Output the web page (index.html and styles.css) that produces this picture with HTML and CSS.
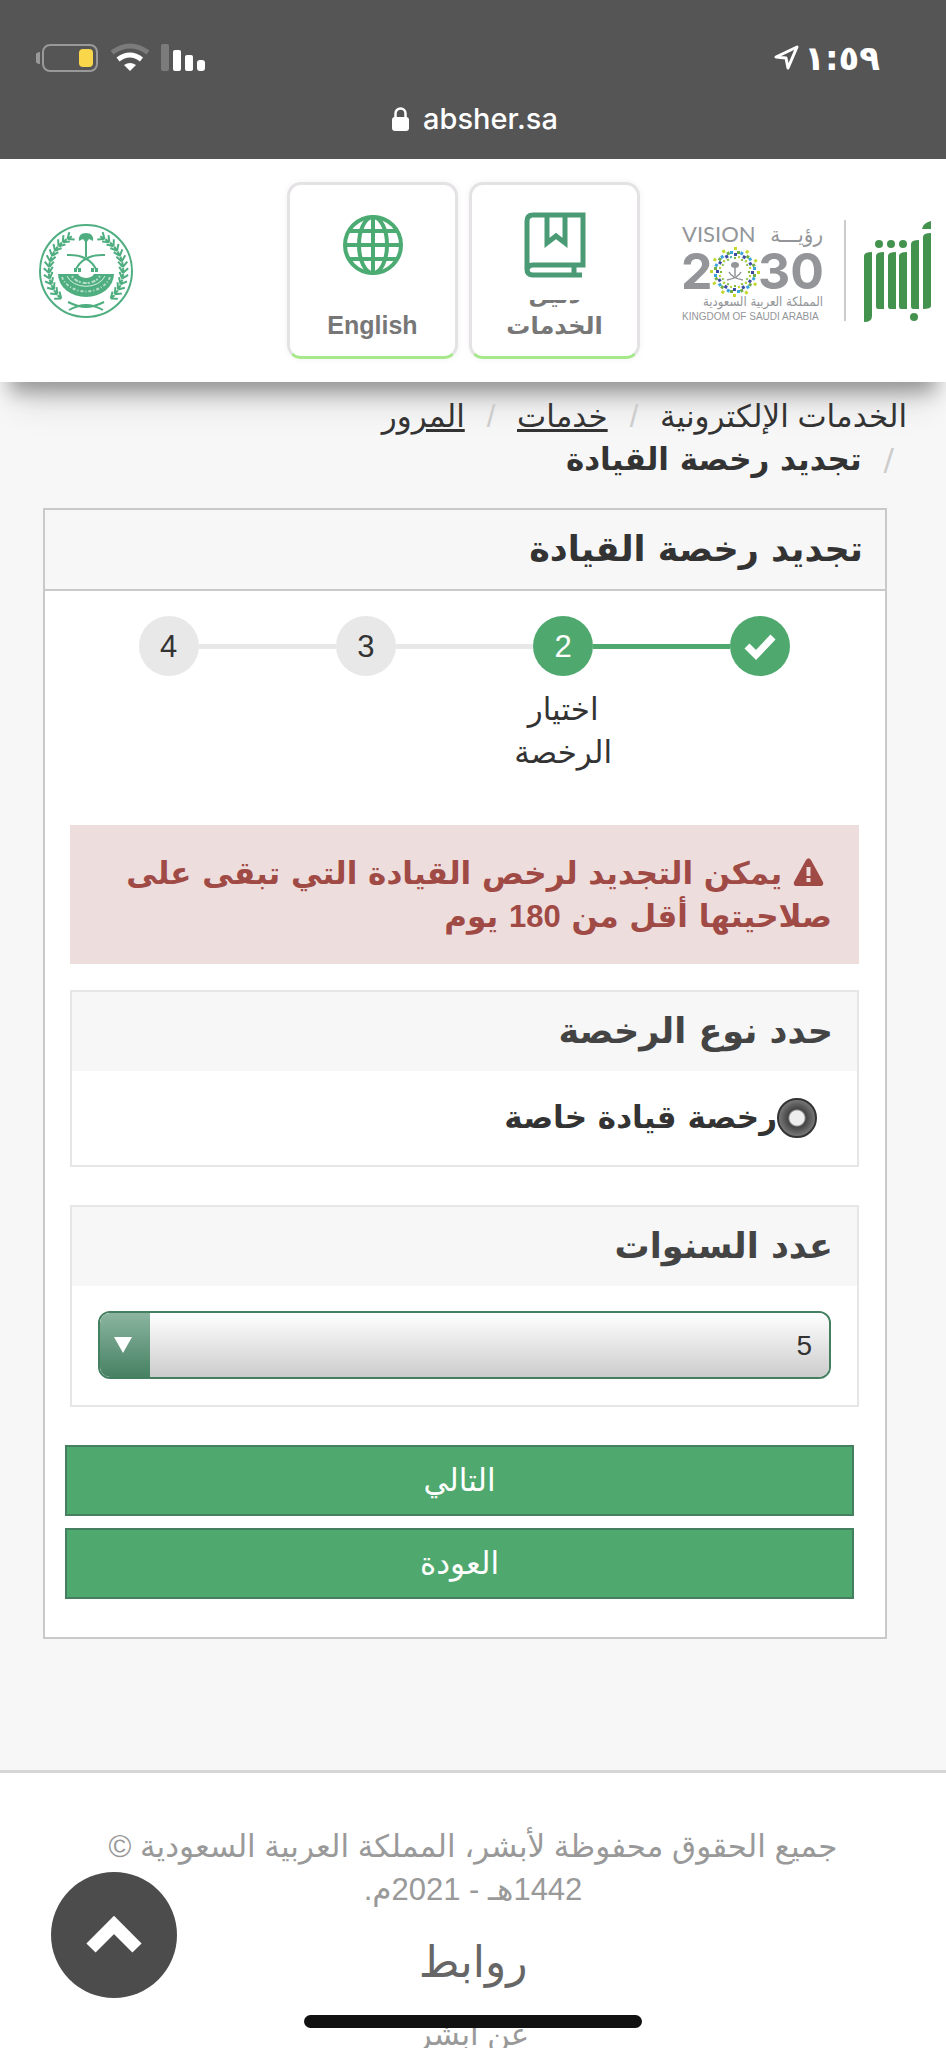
FILE: index.html
```html
<!DOCTYPE html>
<html lang="ar" dir="rtl">
<head>
  <meta charset="utf-8">
  <title>تجديد رخصة القيادة</title>
  <link rel="stylesheet" href="styles.css">
</head>
<body>

  <div class="status-bar" dir="ltr">
    <div class="status-row">
      <svg class="status-icons" width="170" height="30" viewBox="0 0 170 30">
        <path d="M4 9v12a6 6 0 0 1 0-12z" fill="#999"/>
        <rect x="7" y="2" width="54" height="26" rx="7" fill="none" stroke="#999" stroke-width="2"/>
        <rect x="43" y="6" width="14" height="18" rx="4" fill="#f9d64a"/>
        <path d="M76 9.500q18.500-13 36 0" fill="none" stroke="#7b7b7b" stroke-width="5"/>
        <path d="M82 16.500q12-9 23.500 0" fill="none" stroke="#fff" stroke-width="5"/>
        <path d="M88 22q6-4 12 0l-6 6z" fill="#fff"/>
        <rect x="125" y="1" width="8" height="27" rx="2" fill="#7b7b7b"/>
        <rect x="137" y="7" width="8" height="21" rx="2" fill="#fff"/>
        <rect x="149" y="12" width="8" height="16" rx="2" fill="#fff"/>
        <rect x="161" y="17" width="8" height="11" rx="3" fill="#fff"/>
      </svg>
      <div class="clock">
        <svg width="26" height="26" viewBox="0 0 26 26"><path d="M2 12 23 2 14 23 12 13z" fill="none" stroke="#fff" stroke-width="3" stroke-linejoin="round"/></svg>
        <span>١:٥٩</span>
      </div>
    </div>
    <div class="address">
      <svg width="17" height="24" viewBox="0 0 17 24"><rect y="10" width="17" height="14" rx="3" fill="#fff"/><path d="M3.500 11V6.500a5 5 0 0 1 10 0V11" fill="none" stroke="#fff" stroke-width="2.500"/></svg>
      <span>absher.sa</span>
    </div>
  </div>

  <header class="header">
    <div class="logos">
      <svg width="72" height="104" viewBox="0 0 72 104" fill="#43934f">
        <path d="M4 37q0-4 8-4v64q0 6-8 6z"/>
        <path d="M16 37q0-4 8-4v57h-6q-2 0-2-3z"/>
        <path d="M28 37q0-4 8-4v57h-6q-2 0-2-3z"/>
        <path d="M39 37q0-4 8-4v57h-6q-2 0-2-3z"/>
        <path d="M51 25q0-4 8-4v69h-6q-2 0-2-3z"/>
        <path d="M63 18q0-4 8-4v73q0 3-8 3z"/>
        <path d="M62 10q1-6 9-8v8z"/>
        <circle cx="19" cy="25" r="4"/><circle cx="31" cy="25" r="4"/><circle cx="43" cy="25" r="4"/>
        <circle cx="54" cy="98" r="4"/>
      </svg>
      <span class="logo-divider"></span>
      <svg class="vision" width="148" height="104" viewBox="0 0 148 104" direction="ltr">
        <defs>
          <g id="spike">
            <rect x="-1" y="-25" width="3" height="3" fill="#c3d82d"/>
            <rect x="-5" y="-21" width="3" height="3" fill="#3ba4dc"/>
            <rect x="2" y="-21" width="3" height="3" fill="#6fae45"/>
            <rect x="-1" y="-19" width="3" height="3" fill="#3a4ba0"/>
            <rect x="-5" y="-16" width="2" height="2" fill="#c3d82d"/>
            <rect x="3" y="-16" width="2" height="2" fill="#46b2c8"/>
            <rect x="-1" y="-15" width="2" height="2" fill="#7dba3c"/>
          </g>
        </defs>
        <text class="vision-word" x="0" y="23" font-size="22">VISION</text>
        <text x="141" y="23" font-size="22" text-anchor="end">رؤيـــة</text>
        <text class="vision-number" x="-1" y="70" font-size="50">2</text>
        <text class="vision-number" x="76" y="70" font-size="50">30</text>
        <g transform="translate(53 53)">
          <use href="#spike"/><use href="#spike" transform="rotate(30)"/><use href="#spike" transform="rotate(60)"/>
          <use href="#spike" transform="rotate(90)"/><use href="#spike" transform="rotate(120)"/><use href="#spike" transform="rotate(150)"/>
          <use href="#spike" transform="rotate(180)"/><use href="#spike" transform="rotate(210)"/><use href="#spike" transform="rotate(240)"/>
          <use href="#spike" transform="rotate(270)"/><use href="#spike" transform="rotate(300)"/><use href="#spike" transform="rotate(330)"/>
          <path d="M0-6V4M-8 8Q3 6 6 0M8 8Q-3 6-6 0" fill="none" stroke="#939598" stroke-width="1.500"/>
          <ellipse cy="-7" rx="4" ry="3"/>
        </g>
        <text x="141" y="87" font-size="13" text-anchor="end">المملكة العربية السعودية</text>
        <text class="vision-country" x="0" y="101" font-size="10">KINGDOM OF SAUDI ARABIA</text>
      </svg>
    </div>

    <nav class="tiles">
      <a class="tile" href="#">
        <svg width="62" height="66" viewBox="0 0 62 66" fill="none" stroke="#4a9a75" stroke-width="5">
          <path d="M50 63H9q-6 0-6-6V9q0-6 6-6h50v50H9q-6 0-6 6M50 53v10M48 63h10"/>
          <path d="M23 3v28l9-7 9 7V3"/>
        </svg>
        <span class="tile-label tile-label-long"><span>دليل</span><span>الخدمات</span></span>
      </a>
      <a class="tile" href="#" lang="en">
        <svg width="62" height="66" viewBox="0 0 62 66" fill="none" stroke="#4cab73" stroke-width="4">
          <circle cx="31" cy="33" r="28"/>
          <ellipse cx="31" cy="33" rx="14" ry="28"/>
          <path d="M31 5v56M3 33h56M8 19h46M8 47h46"/>
        </svg>
        <span class="tile-label">English</span>
      </a>
    </nav>

    <svg class="emblem" width="96" height="96" viewBox="0 0 96 96" fill="none" stroke="#4fae80">
      <defs>
        <g id="leaf"><path d="M-37 0l-5-5M-37 0l4-6M-37 0v-5" stroke-width="2"/></g>
        <g id="branch">
          <use href="#leaf" transform="rotate(-48)"/><use href="#leaf" transform="rotate(-39)"/><use href="#leaf" transform="rotate(-30)"/>
          <use href="#leaf" transform="rotate(-21)"/><use href="#leaf" transform="rotate(-12)"/><use href="#leaf" transform="rotate(-3)"/>
          <use href="#leaf" transform="rotate(6)"/><use href="#leaf" transform="rotate(15)"/><use href="#leaf" transform="rotate(24)"/>
          <use href="#leaf" transform="rotate(33)"/><use href="#leaf" transform="rotate(42)"/><use href="#leaf" transform="rotate(51)"/>
          <use href="#leaf" transform="rotate(60)"/>
        </g>
        <g id="branch-flip" transform="scale(-1 1)"><use href="#branch"/></g>
      </defs>
      <circle cx="48" cy="48" r="46" stroke-width="2"/>
      <g transform="translate(48 48)">
        <use href="#branch"/>
        <use href="#branch-flip"/>
        <path d="M-17 39Q-8 34 0 34T17 39M-18 31Q-8 36 0 36T18 31" stroke-width="2"/>
        <path d="M0-34V-14" stroke-width="2"/>
        <path d="M-7-30q-1-8 7-8t7 8l-4-2-3 4-3-4z" fill="#4fae80" stroke="none"/>
        <path d="M-19-16Q2-17 10-2M19-16Q-2-17-10-2" stroke-width="2"/>
        <path d="M-12-1h7M5-1h7" stroke-width="4" stroke-dasharray="3 1"/>
        <path d="M-28 3h56a28 23 0 0 1-56 0z" fill="#4fae80" stroke="none"/>
        <path d="M-19 5a20 15 0 0 0 38 0" stroke="#d7eee2" stroke-width="1"/>
        <path d="M-24 6a25 20 0 0 0 48 0" stroke="#b5ddca" stroke-width="2" stroke-dasharray="3 2 1 2"/>
        <path d="M-14 5a15 11 0 0 0 28 0" stroke="#b5ddca" stroke-width="2" stroke-dasharray="2 2 4 1"/>
        <path d="M-8 2a8 5 0 0 0 16 0z" fill="#fff" stroke="none"/>
      </g>
    </svg>
  </header>

  <main>
    <ol class="breadcrumb">
      <li>الخدمات الإلكترونية</li>
      <li><a href="#">خدمات</a></li>
      <li><a href="#">المرور</a></li>
      <li class="current">تجديد رخصة القيادة</li>
    </ol>

    <form class="panel">
      <h1 class="panel-title">تجديد رخصة القيادة</h1>
      <div class="panel-body">
        <ol class="steps">
          <li class="step done">
            <div class="step-track"><span class="step-circle"><svg width="32" height="28" viewBox="0 0 32 28"><path d="m3 14 9 9L29 5" fill="none" stroke="#fff" stroke-width="7"/></svg></span></div>
          </li>
          <li class="step active">
            <div class="step-track"><span class="step-circle">2</span></div>
            <span class="step-label">اختيار الرخصة</span>
          </li>
          <li class="step"><div class="step-track"><span class="step-circle">3</span></div></li>
          <li class="step"><div class="step-track"><span class="step-circle">4</span></div></li>
        </ol>

        <p class="alert">
          <svg width="31" height="28" viewBox="0 0 31 28"><path d="M13 2q2.500-3.500 5 0l12 22q1 4-3 4H4q-4 0-3-4z" fill="#a04a46"/><path d="M15.500 9v9M15.500 20v4" stroke="#eedddd" stroke-width="4"/></svg>
          يمكن التجديد لرخص القيادة التي تبقى على صلاحيتها أقل من <b>180</b> يوم
        </p>

        <section class="card">
          <h2 class="card-title">حدد نوع الرخصة</h2>
          <div class="card-body">
            <label class="choice"><input type="radio" name="license" checked>رخصة قيادة خاصة</label>
          </div>
        </section>

        <section class="card">
          <h2 class="card-title"><label for="years">عدد السنوات</label></h2>
          <div class="card-body">
            <div class="select-box">
              <select id="years"><option>5</option><option>10</option></select>
              <span class="select-arrow"></span>
            </div>
          </div>
        </section>

        <div class="actions">
          <button type="button" class="btn">التالي</button>
          <button type="button" class="btn">العودة</button>
        </div>
      </div>
    </form>
  </main>

  <footer class="footer">
    <p class="copyright">جميع الحقوق محفوظة لأبشر، المملكة العربية السعودية © 1442هـ - 2021م.</p>
    <h2 class="footer-title">روابط</h2>
    <a class="footer-link" href="#">عن ابشر</a>
  </footer>

  <button type="button" class="to-top" aria-label="أعلى الصفحة">
    <svg width="56" height="40" viewBox="0 0 56 40"><path d="M5 33 28 10 51 33" fill="none" stroke="#fff" stroke-width="13"/></svg>
  </button>
  <div class="home-bar"></div>

</body>
</html>
```
FILE: styles.css
```css
* { box-sizing: border-box; margin: 0; padding: 0; }

body {
  font-family: "Liberation Sans", "DejaVu Sans", sans-serif;
  font-size: 31px;
  line-height: 43px;
  height: 100vh;
  overflow: hidden;
  background: #f7f7f7;
  color: #333;
}

ol { list-style: none; }

a { color: inherit; }

.status-bar {
  height: 159px;
  padding-top: 36px;
  background: #555;
  color: #fff;
}

.status-row {
  display: flex;
  justify-content: space-between;
  align-items: center;
  height: 44px;
  padding: 0 66px 0 36px;
}

.clock {
  display: flex;
  align-items: center;
  gap: 4px;
  font-family: "DejaVu Sans", sans-serif;
  font-size: 34px;
  font-weight: bold;
}

.address {
  display: flex;
  align-items: center;
  justify-content: center;
  gap: 14px;
  padding: 17px 0 0 4px;
  font-family: Inter, sans-serif;
  font-size: 29px;
  font-weight: 500;
}

.header {
  position: relative;
  display: flex;
  align-items: center;
  height: 223px;
  padding: 0 14px 0 38px;
  background: #fff;
  box-shadow: 0 20px 18px -10px rgba(0, 0, 0, 0.32), 0 34px 34px -14px rgba(0, 0, 0, 0.12);
}

.logos {
  display: flex;
  align-items: center;
  gap: 14px;
}

.logo-divider {
  width: 2px;
  height: 101px;
  background: #ccc;
}

.vision {
  fill: #939598;
  font-family: "DejaVu Sans Condensed", "DejaVu Sans", sans-serif;
}

.vision-word { font-family: Lato, sans-serif; }

.vision-country { font-family: "Liberation Sans", sans-serif; }

.vision-number {
  font-family: Inter, sans-serif;
  font-weight: bold;
}

.tiles {
  display: flex;
  gap: 11px;
  margin-right: 42px;
  margin-left: auto;
}

.tile {
  display: flex;
  flex-direction: column;
  align-items: center;
  gap: 22px;
  width: 171px;
  height: 177px;
  padding-top: 27px;
  border: 3px solid #e4e2e4;
  border-bottom-color: #a8e88c;
  border-radius: 14px;
  box-shadow: 0 0 6px rgba(0, 0, 0, 0.06);
  color: #777;
  text-decoration: none;
}

.tile svg { flex-shrink: 0; }

.tile-label {
  display: flex;
  flex-direction: column;
  justify-content: flex-end;
  flex-shrink: 0;
  height: 41px;
  overflow: hidden;
  font-size: 25px;
  font-weight: bold;
  line-height: 31px;
  text-align: center;
}

.tile-label span { flex-shrink: 0; }

.tile-label-long { font-size: 24px; }

.breadcrumb {
  position: relative;
  padding: 13px 39px 27px 80px;
}

.breadcrumb li { display: inline-block; }

.breadcrumb li + li::before {
  content: "/";
  display: inline-block;
  padding-right: 13px;
  padding-left: 22px;
  color: #ccc;
  font-weight: normal;
}

.breadcrumb .current,
.panel-title,
.alert,
.card-title,
.choice {
  font-family: "DejaVu Sans", sans-serif;
  font-weight: bold;
}

.panel {
  margin: 0 59px 0 43px;
  border: 2px solid #c9c9c9;
  background: #fff;
}

.panel-title {
  padding: 18px 22px;
  border-bottom: 2px solid #c9c9c9;
  background: #f7f7f7;
  font-size: 35px;
}

.panel-body { padding: 25px 26px 38px 25px; }

.steps {
  display: flex;
  height: 209px;
}

.step {
  flex: 1;
  text-align: center;
}

.step-track {
  display: flex;
  align-items: center;
}

.step-track::before,
.step-track::after {
  content: "";
  flex: 1;
  height: 5px;
  background: #e8e8e8;
}

.step:first-child .step-track::before,
.step:last-child .step-track::after { background: none; }

.done .step-track::after,
.active .step-track::before { background: #4fa96e; }

.step-circle {
  display: flex;
  align-items: center;
  justify-content: center;
  width: 60px;
  height: 60px;
  border-radius: 50%;
  background: #e8e8e8;
}

.done .step-circle,
.active .step-circle {
  background: #4fa96e;
  color: #fff;
}

.step-label {
  display: block;
  padding: 12px 40px;
}

.alert {
  min-height: 139px;
  padding: 27px 27px 0 40px;
  background: #eedddd;
  color: #a04a46;
}

.alert b { font-family: "Liberation Sans", sans-serif; }

.alert svg {
  margin-right: 8px;
  vertical-align: -2px;
}

.card {
  margin-top: 26px;
  border: 2px solid #e6e6e6;
}

.card + .card { margin-top: 38px; }

.card-title {
  padding: 18px 24px;
  background: #f7f7f7;
  color: #444;
  font-size: 35px;
}

.card-body { padding: 25px 26px 26px; }

.choice {
  display: flex;
  align-items: center;
  padding-right: 14px;
}

.choice input {
  appearance: none;
  width: 40px;
  height: 40px;
  border: 2px solid #333;
  border-radius: 50%;
  background: radial-gradient(circle, #eee 7px, #444 9px, #777 18px);
}

.select-box {
  position: relative;
  overflow: hidden;
  height: 68px;
  border: 2px solid #44805f;
  border-radius: 12px;
}

.select-box select {
  appearance: none;
  width: 100%;
  height: 100%;
  padding: 0 17px;
  border: 0;
  background: linear-gradient(#fff, #ccc);
  color: #333;
  font-family: inherit;
  font-size: 28px;
}

/* sits on the left end of the drop-down */
.select-arrow {
  position: absolute;
  top: 0;
  bottom: 0;
  left: 0;
  display: flex;
  align-items: center;
  justify-content: center;
  width: 50px;
  padding-right: 4px;
  background: linear-gradient(#8bb5a0, #468163);
  pointer-events: none;
}

.select-arrow::before {
  content: "";
  border: 9px solid transparent;
  border-top: 16px solid #fff;
  border-bottom: 0;
}

.actions {
  display: flex;
  flex-direction: column;
  gap: 12px;
  margin: 38px 5px 0 -5px;
}

.btn {
  height: 71px;
  border: 2px solid #44805f;
  background: #4fa96e;
  color: #fff;
  font-family: inherit;
  font-size: 31px;
}

.footer {
  display: flex;
  flex-direction: column;
  align-items: center;
  margin-top: 131px;
  padding: 52px 80px 0;
  border-top: 3px solid #d6d6d6;
  background: #fff;
  color: #999;
  text-align: center;
}

.footer-title {
  padding: 26px 0;
  color: #666;
  font-size: 44px;
  font-weight: normal;
  line-height: 50px;
}

.footer-link { text-decoration: none; }

.to-top {
  position: fixed;
  left: 51px;
  bottom: 50px;
  display: flex;
  align-items: center;
  justify-content: center;
  width: 126px;
  height: 126px;
  border: 0;
  border-radius: 50%;
  background: #4c4c4c;
}

.home-bar {
  position: fixed;
  left: 50%;
  bottom: 20px;
  width: 338px;
  height: 13px;
  margin-left: -169px;
  border-radius: 7px;
  background: #111;
}
```
